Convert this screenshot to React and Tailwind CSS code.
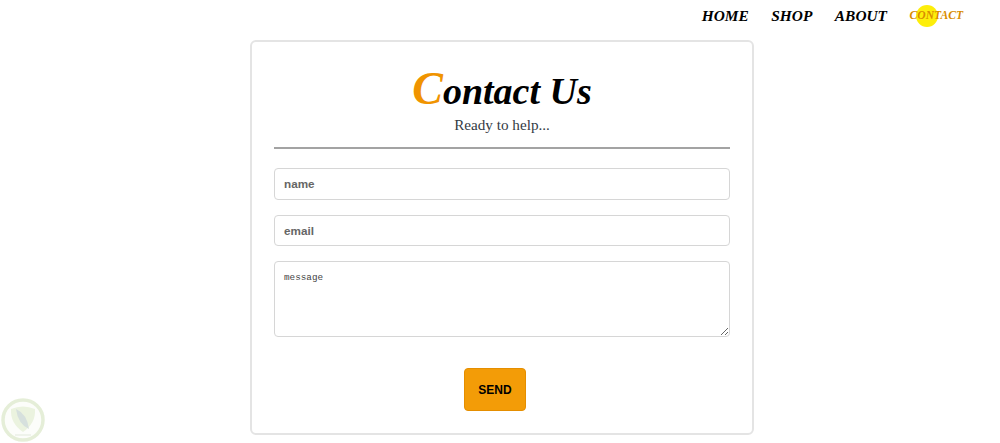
import React from "react";

const navLinks = ["HOME", "SHOP", "ABOUT"];

function Watermark() {
  return (
    <svg className="absolute left-0 bottom-0 opacity-70 blur-[0.6px]" width="46" height="46" viewBox="0 0 46 46">
      <circle cx="23" cy="23" r="20" fill="#fbfdf8" stroke="#dbe8c8" strokeWidth="3.5" />
      <path d="M11 12 Q23 7 35 12 Q36 26 23 35 Q10 26 11 12Z" fill="#e3eed2" />
      <path d="M16 12 Q27 17 29 32 Q18 27 16 12Z" fill="#c5d3d0" />
      <path d="M15 38 H31" stroke="#e3e8dd" strokeWidth="1.5" />
    </svg>
  );
}

function App() {
  return (
    <div className="relative h-[443px] overflow-hidden bg-white font-['Liberation_Serif',serif]">
      <nav className="flex justify-end items-center h-[40px] pr-[37px] pb-[9px] gap-[22.5px] italic font-bold text-black">
        {navLinks.map((link) => (
          <a key={link} className="text-[15.4px] leading-none">
            {link}
          </a>
        ))}
        <a className="relative text-[11.6px] leading-none text-[#d98c00]">
          <span className="absolute left-[6px] top-[-5px] w-[22px] h-[22px] rounded-full bg-[#fdee0a]"></span>
          <span className="relative">CONTACT</span>
        </a>
      </nav>

      <div className="w-[504px] h-[395px] ml-[250px] border-2 border-[#e4e4e4] rounded-[6px] px-[22px] pt-[21px]">
        <h1 className="text-center italic font-bold text-[38px] leading-[52px] text-black">
          <span className="text-[46px] text-[#f09400]">C</span>ontact Us
        </h1>
        <p className="text-center text-[15.2px] leading-[18px] -mt-px text-[#333a44]">Ready to help...</p>
        <div className="mt-[13px] h-[2px] bg-[#a3a3a3]"></div>

        <form className="flex flex-col mt-[19px] font-['Liberation_Sans',sans-serif]">
          <input
            placeholder="name"
            className="h-[32px] px-[9px] pb-[1px] border border-[#d6d6d6] rounded-[4px] text-[11.7px] font-bold placeholder:text-[#666]"
          />
          <input
            placeholder="email"
            className="h-[31px] mt-[15px] px-[9px] pb-[1px] border border-[#d6d6d6] rounded-[4px] text-[11.7px] font-bold placeholder:text-[#666]"
          />
          <textarea
            placeholder="message"
            className="h-[76px] mt-[15px] px-[9px] pt-[10px] border border-[#d6d6d6] rounded-[4px] text-[9.3px] leading-[12px] font-['Liberation_Mono',monospace] placeholder:text-[#444]"
          ></textarea>
          <button
            type="button"
            className="self-start w-[62px] h-[43px] mt-[31px] ml-[190px] bg-[#f39c07] border border-[#e58e00] rounded-[4px] text-[12px] font-bold text-black"
          >
            SEND
          </button>
        </form>
      </div>

      <Watermark />
    </div>
  );
}

export default App;
